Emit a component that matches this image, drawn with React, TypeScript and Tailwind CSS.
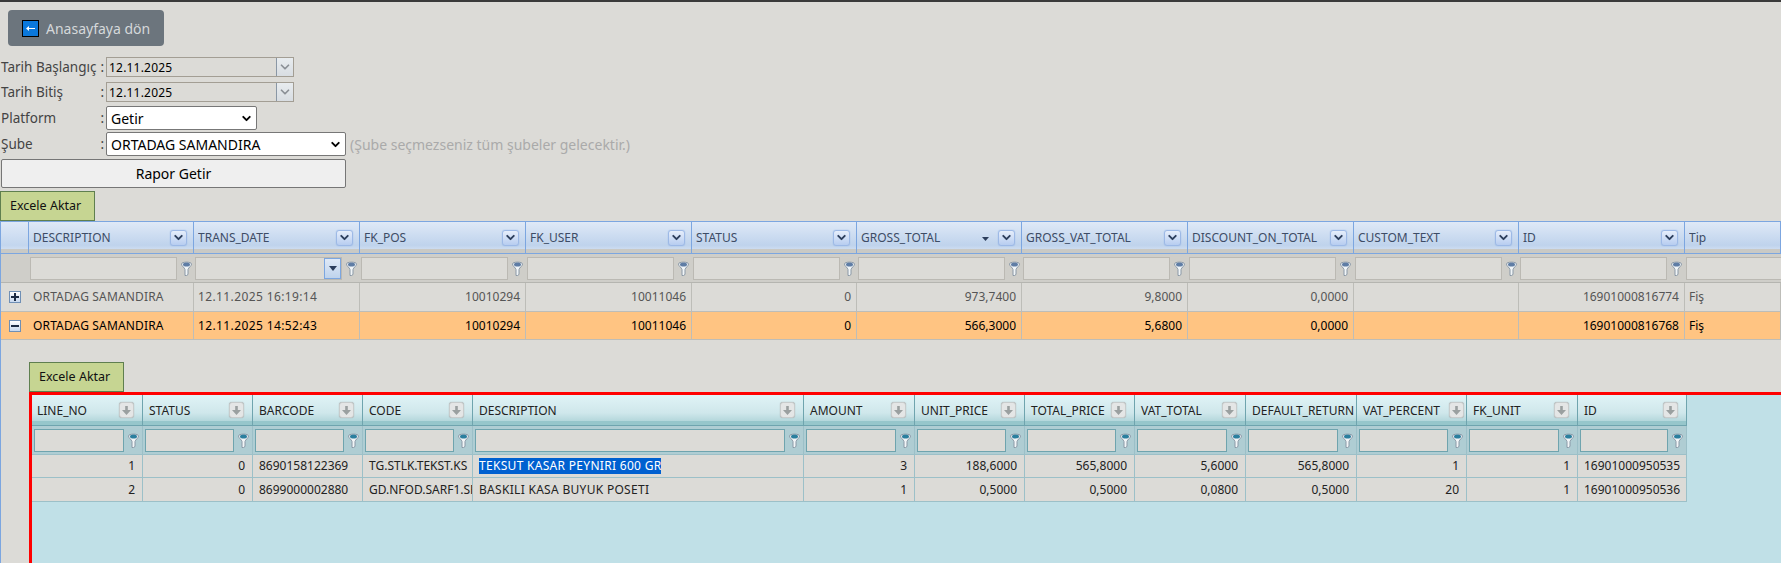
import { ChevronDown } from "lucide-react";

const font = "font-['Noto_Sans','DejaVu_Sans',sans-serif]";

const mainCols = [
  { name: "DESCRIPTION" },
  { name: "TRANS_DATE" },
  { name: "FK_POS" },
  { name: "FK_USER" },
  { name: "STATUS" },
  { name: "GROSS_TOTAL", sorted: true },
  { name: "GROSS_VAT_TOTAL" },
  { name: "DISCOUNT_ON_TOTAL" },
  { name: "CUSTOM_TEXT" },
  { name: "ID" },
  { name: "Tip", noMenu: true },
];

const mainRows = [
  ["ORTADAG SAMANDIRA", "12.11.2025 16:19:14", "10010294", "10011046", "0", "973,7400", "9,8000", "0,0000", "", "16901000816774", "Fiş"],
  ["ORTADAG SAMANDIRA", "12.11.2025 14:52:43", "10010294", "10011046", "0", "566,3000", "5,6800", "0,0000", "", "16901000816768", "Fiş"],
];
const mainRight = [false, false, true, true, true, true, true, true, false, true, false];

const detailCols = [
  { name: "LINE_NO" },
  { name: "STATUS" },
  { name: "BARCODE" },
  { name: "CODE" },
  { name: "DESCRIPTION" },
  { name: "AMOUNT" },
  { name: "UNIT_PRICE" },
  { name: "TOTAL_PRICE" },
  { name: "VAT_TOTAL" },
  { name: "DEFAULT_RETURN", noButton: true },
  { name: "VAT_PERCENT", tight: true },
  { name: "FK_UNIT" },
  { name: "ID" },
];
const detailRight = [true, true, false, false, false, true, true, true, true, true, true, true, false];
const detailRows = [
  ["1", "0", "8690158122369", "TG.STLK.TEKST.KS", "TEKSUT KASAR PEYNIRI 600 GR", "3", "188,6000", "565,8000", "5,6000", "565,8000", "1", "1", "16901000950535"],
  ["2", "0", "8699000002880", "GD.NFOD.SARF1.SR", "BASKILI KASA BUYUK POSETI", "1", "0,5000", "0,5000", "0,0800", "0,5000", "20", "1", "16901000950536"],
];

const mainGrid = "grid grid-cols-[28px_165px_166px_166px_166px_165px_165px_166px_166px_165px_166px_96px]";
const detailGrid = "grid grid-cols-[111px_110px_110px_110px_331px_111px_110px_110px_111px_111px_110px_111px_109px]";

function Funnel({ teal }: { teal?: boolean }) {
  return (
    <svg width="11" height="15" viewBox="0 0 11 15" className="shrink-0">
      <path d="M0.5 3 C0.5 0.5 10.5 0.5 10.5 3 C10.5 5 7.5 6.5 7 8.5 V13.5 L5.5 14.5 H4 V8.5 C3.5 6.5 0.5 5 0.5 3 Z" fill="#f1f5f7" stroke="#8a98a6" />
      <ellipse cx="5.5" cy="3.5" rx="3.5" ry="2" fill={teal ? "#2b7f9e" : "#5f7da5"} />
    </svg>
  );
}

function MenuButton() {
  return (
    <span className="shrink-0 w-[17px] h-[16px] rounded-[3px] border border-[#9db9e6] bg-gradient-to-b from-[#e6eefb] to-[#b7cdf0] flex items-center justify-center shadow-[0_0_1px_#7ca6e0]">
      <ChevronDown size={13} strokeWidth={3.5} className="text-[#2c3e5c]" />
    </span>
  );
}

function GreyButton() {
  return (
    <span className="shrink-0 w-[15px] h-[16px] rounded-[3px] border border-[#c8cccc] bg-[#e4e6e6] flex items-center justify-center shadow-[0_0_1px_#999]">
      <svg width="9" height="9" viewBox="0 0 9 9">
        <path d="M3.2 0 H5.8 V4 H9 L4.5 9 L0 4 H3.2 Z" fill="#9aa0a0" />
      </svg>
    </span>
  );
}

function DateField({ value }: { value: string }) {
  return (
    <div className="w-[188px] h-[20px] border border-[#a39e94] bg-[#dcdbd7] flex items-center">
      <span className="flex-1 pl-[2px] pt-px text-[12px] tracking-[0.2px] text-black">{value}</span>
      <span className="w-[17px] h-full border-l border-[#8a97a5] bg-gradient-to-b from-[#e8ecef] to-[#d8dde2] flex items-center justify-center">
        <ChevronDown size={14} strokeWidth={3} className="text-[#8b9096]" />
      </span>
    </div>
  );
}

function FormLabel({ text }: { text: string }) {
  return (
    <div className="w-[106px] flex justify-between pl-px pr-[2px] text-[13.5px] text-[#444]">
      <span>{text}</span>
      <span>:</span>
    </div>
  );
}

function NativeSelect({ value, w }: { value: string; w: string }) {
  return (
    <div className={`${w} h-[24px] bg-white border border-[#777] rounded-[2px] flex items-center justify-between pl-[4px] pr-[3px] text-[14px] text-black`}>
      <span>{value}</span>
      <ChevronDown size={13} strokeWidth={3.5} className="text-black" />
    </div>
  );
}

function ExcelButton() {
  return (
    <button className="block w-[95px] h-[30px] bg-[#c6d592] border border-[#5f7f4f] pl-[9px] text-left text-[12.5px] text-[#111]">
      Excele Aktar
    </button>
  );
}

export default function App() {
  return (
    <div className={`w-[1781px] h-[563px] overflow-hidden bg-[#dcdbd7] border-t-2 border-[#3a3a3a] ${font}`}>
      <div className="pl-[8px] pt-[8px]">
        <button className="w-[156px] h-[36px] rounded-[4px] bg-[#6c757d] flex items-center gap-[7px] pl-[14px] text-[14px] text-[#d5d8da]">
          <span className="w-[17px] h-[17px] border border-black bg-[#0a78dc] flex items-center justify-center">
            <svg width="9" height="7" viewBox="0 0 9 7">
              <path d="M0 3.5 L3 1 V3 H9 V4 H3 V6 Z" fill="#fff" />
            </svg>
          </span>
          Anasayfaya dön
        </button>
      </div>

      <div className="mt-[11px] flex items-center h-[20px]">
        <FormLabel text="Tarih Başlangıç" />
        <DateField value="12.11.2025" />
      </div>
      <div className="mt-[5px] flex items-center h-[20px]">
        <FormLabel text="Tarih Bitiş" />
        <DateField value="12.11.2025" />
      </div>
      <div className="mt-[4px] flex items-center h-[24px]">
        <FormLabel text="Platform" />
        <NativeSelect value="Getir" w="w-[151px]" />
      </div>
      <div className="mt-[2px] flex items-center h-[24px]">
        <FormLabel text="Şube" />
        <NativeSelect value="ORTADAG SAMANDIRA" w="w-[240px]" />
        <span className="ml-[4px] text-[14px] text-[#aaa]">(Şube seçmezseniz tüm şubeler gelecektir.)</span>
      </div>
      <button className="block mt-[3px] ml-px w-[345px] h-[29px] bg-[#efefef] border border-[#767676] rounded-[2px] text-[14px] text-black">
        Rapor Getir
      </button>
      <div className="mt-[3px]">
        <ExcelButton />
      </div>

      {/* Main grid */}
      <div className="border-l border-[#7ca6e0] h-[342px]">
        <div className={mainGrid}>
          <div className="relative h-[33px] border-t border-b border-r border-[#7ca6e0] bg-gradient-to-b from-[#dfe9f7] via-[#c3d6ee] via-75% to-[#dbe6f5]">
            <span className="absolute left-0 right-0 bottom-0 h-[4px] bg-[#c9c9c5]" />
          </div>
          {mainCols.map((c) => (
            <div key={c.name} className="relative h-[33px] border-t border-b border-r border-[#7ca6e0] bg-gradient-to-b from-[#dfe9f7] via-[#bfd3ec] via-75% to-[#dbe6f5] flex items-center pl-[4px] pr-[6px] text-[12px] text-[#3d4c66]">
              <span className="flex-1 pt-px whitespace-nowrap overflow-hidden">{c.name}</span>
              {c.sorted && (
                <svg width="7" height="4" viewBox="0 0 7 4" className="mr-[9px] mt-[3px] shrink-0">
                  <path d="M0 0 H7 L3.5 4 Z" fill="#2c3e5c" />
                </svg>
              )}
              {!c.noMenu && <MenuButton />}
              <span className="absolute left-0 right-0 bottom-0 h-[4px] bg-[#c9c9c5]" />
            </div>
          ))}
        </div>

        <div className={`${mainGrid} bg-[#cfcec9] border-b border-[#b5b5b0]`}>
          <div className="h-[28px]" />
          {mainCols.map((c, i) => (
            <div key={c.name} className="h-[28px] flex items-center pl-[1px] gap-[4px] overflow-hidden">
              <div className="w-[147px] shrink-0 h-[23px] border border-[#bbb9b3] bg-[#dcdbd7] flex justify-end">
                {i === 1 && (
                  <span className="w-[17px] h-full border border-[#7ca6e0] bg-gradient-to-b from-[#dfe9f7] to-[#bfd3ec] flex items-center justify-center">
                    <svg width="8" height="5" viewBox="0 0 8 5">
                      <path d="M0 0 H8 L4 5 Z" fill="#2c3e5c" />
                    </svg>
                  </span>
                )}
              </div>
              <Funnel />
            </div>
          ))}
        </div>

        {mainRows.map((row, r) => (
          <div key={r} className={`${mainGrid} ${r === 1 ? "bg-[#ffc482] text-black" : "bg-[#dcdbd7] text-[#555]"} border-b border-[#bdbdb8]`}>
            <div className={`${r === 0 ? "h-[28px]" : "h-[27px]"} flex items-center pl-[8px]`}>
              <span className="w-[12px] h-[12px] border border-[#6f8fb5] bg-gradient-to-b from-white to-[#c7d8ee] flex items-center justify-center">
                <svg width="8" height="8" viewBox="0 0 8 8">
                  <path d={r === 0 ? "M3 0 H5 V3 H8 V5 H5 V8 H3 V5 H0 V3 H3 Z" : "M0 3 H8 V5 H0 Z"} fill="#1d2c44" />
                </svg>
              </span>
            </div>
            {row.map((v, i) => (
              <div key={i} className={`${r === 0 ? "h-[28px]" : "h-[27px]"} border-r border-[#bdbdb8] flex items-center pl-[4px] pr-[5px] text-[12px] whitespace-nowrap overflow-hidden ${mainRight[i] ? "justify-end" : ""} ${i === 1 ? "tracking-[0.38px]" : i === 0 ? "tracking-[0.15px]" : ""}`}>
                {v}
              </div>
            ))}
          </div>
        ))}

        {/* Detail */}
        <div className="mt-[22px] ml-[28px]">
          <ExcelButton />
          <div className="border-t-[3px] border-l-[3px] border-[#ff0000] bg-[#c0e0e7] h-[171px]">
            <div className={`${detailGrid} w-fit`}>
              {detailCols.map((c, i) => (
                <div key={c.name} className={`relative h-[31px] border-r border-b border-[#6fa4ae] bg-gradient-to-b from-[#e0f3f6] via-[#cfe7eb] via-60% to-[#a6cfd4] flex items-center text-[12px] text-[#222] ${i === 0 ? "pl-[5px]" : "pl-[6px]"} ${c.noButton ? "pr-0" : c.tight ? "pr-[2px]" : "pr-[8px]"}`}>
                  <span className="flex-1 pt-px whitespace-nowrap">{c.name}</span>
                  {!c.noButton && <GreyButton />}
                  <span className="absolute left-0 right-0 bottom-0 h-[4px] bg-[#96c6cb]" />
                </div>
              ))}
              {detailCols.map((c) => (
                <div key={c.name} className="h-[29px] border-r border-b border-[#9cc0c8] bg-[#afcdd3] flex items-center pl-[2px] pr-[3px] gap-[4px]">
                  <div className="flex-1 h-[23px] border border-[#6fa4ae] bg-[#dcdbd7]" />
                  <Funnel teal />
                </div>
              ))}
              {detailRows.map((row, r) =>
                row.map((v, i) => (
                  <div key={`${r}-${i}`} className={`${r === 1 ? "h-[24px]" : "h-[23px]"} border-r border-b border-[#9cc0c8] bg-[#dcdbd7] flex items-center pl-[6px] text-[12px] text-[#222] whitespace-nowrap overflow-hidden ${detailRight[i] ? "justify-end pr-[7px]" : ""} ${i === 4 ? "tracking-[0.3px]" : ""}`}>
                    {v === "TEKSUT KASAR PEYNIRI 600 GR" ? <span className="bg-[#0060d0] text-white leading-[16px]">{v}</span> : v}
                  </div>
                ))
              )}
            </div>
          </div>
        </div>
      </div>
    </div>
  );
}
